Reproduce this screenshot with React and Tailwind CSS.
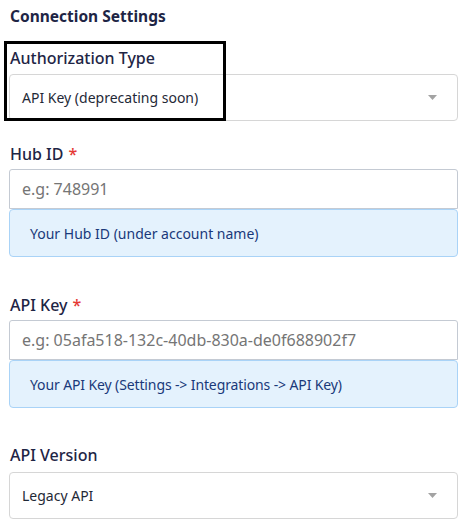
import React from "react";

function Caret() {
  return (
    <svg width="9" height="5" viewBox="0 0 9 5" className="shrink-0">
      <path d="M0 0 H9 L4.5 5 Z" fill="#a3a3a3" />
    </svg>
  );
}

function Select({ value }) {
  return (
    <div className="flex h-[47px] items-center justify-between rounded-[4px] border border-[#d6d6d6] bg-white pl-[12px] pr-[20px]">
      <span className="text-[14px] text-[#1f2937]">{value}</span>
      <Caret />
    </div>
  );
}

function Label({ children, required }) {
  return (
    <div className="px-[1px] text-[16px] leading-[24px] font-medium text-[#1e2545]">
      {children}
      {required && <span className="ml-[5px] text-[#e53935]">*</span>}
    </div>
  );
}

function InputWithHelp({ placeholder, help, tight }) {
  return (
    <div className="flex flex-col">
      <div className="flex h-[40px] items-center rounded-t-[3px] border border-[#c4cad3] bg-white px-[12px]">
        <span className="text-[16px] text-[#757575]">{placeholder}</span>
      </div>
      <div className="flex h-[48px] items-center rounded-[4px] border border-[#a9d3f7] bg-[#e4f2fd] px-[20px]">
        <span className={tight ? "text-[14px] tracking-[-0.12px] text-[#19397a]" : "text-[14px] text-[#19397a]"}>
          {help}
        </span>
      </div>
    </div>
  );
}

export default function App() {
  return (
    <div
      className="relative h-[527px] w-[467px] overflow-hidden bg-white px-[9px]"
      style={{ fontFamily: '"Noto Sans", "Open Sans", sans-serif' }}
    >
      <div className="pt-[4px] pl-[1px] text-[15.5px] leading-[24px] font-bold text-[#1e2545]">
        Connection Settings
      </div>

      <div className="mt-[18px]">
        <Label>Authorization Type</Label>
        <div className="mt-[4px]">
          <Select value="API Key (deprecating soon)" />
        </div>
      </div>

      <div className="mt-[21px]">
        <Label required>Hub ID</Label>
        <div className="mt-[3px]">
          <InputWithHelp placeholder="e.g: 748991" help="Your Hub ID (under account name)" />
        </div>
      </div>

      <div className="mt-[36px]">
        <Label required>API Key</Label>
        <div className="mt-[3px]">
          <InputWithHelp
            placeholder="e.g: 05afa518-132c-40db-830a-de0f688902f7"
            help="Your API Key (Settings -> Integrations -> API Key)"
            tight
          />
        </div>
      </div>

      <div className="mt-[35px]">
        <Label>API Version</Label>
        <div className="mt-[5px]">
          <Select value="Legacy API" />
        </div>
      </div>

      <div className="pointer-events-none absolute left-[4px] top-[41px] h-[80px] w-[222px] border-[3px] border-black" />
    </div>
  );
}
